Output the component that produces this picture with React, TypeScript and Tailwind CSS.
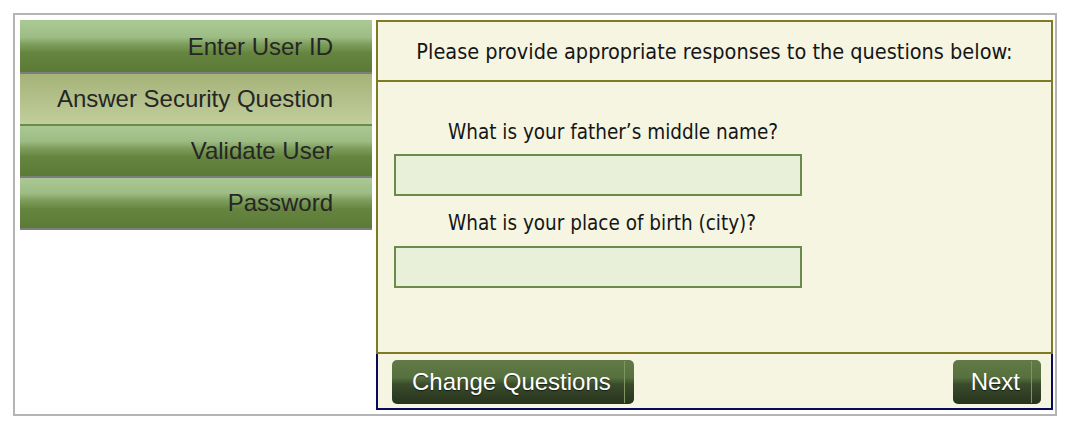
import React from 'react';

const steps = [
  { label: 'Enter User ID', active: false, line: 'border-[#7e7e7e]' },
  { label: 'Answer Security Question', active: true, line: 'border-[#6b8a4b]' },
  { label: 'Validate User', active: false, line: 'border-[#7e7e7e]' },
  { label: 'Password', active: false, line: 'border-[#7e7e7e]' },
];

const questions = ["What is your father’s middle name?", 'What is your place of birth (city)?'];

const tahoma = "font-['DejaVu_Sans_Condensed','DejaVu_Sans',sans-serif]";

const GreenButton = ({ children, pad }: { children: React.ReactNode; pad: string }) => (
  <button className="flex h-[44px] items-stretch rounded-[5px] bg-[linear-gradient(to_bottom,#627a48_0%,#56703e_40%,#3a4c2b_55%,#27331d_100%)] font-['Liberation_Sans',Arial,sans-serif] text-[24px] text-white [text-shadow:0_1px_1px_rgba(0,0,0,0.6)]">
    <span className={`flex flex-1 items-center justify-center ${pad}`}>{children}</span>
    <span className="my-[1px] w-px bg-[#7e965f]" />
    <span className="w-[9px]" />
  </button>
);

export default function App() {
  return (
    <div className="bg-white p-[13px]">
      <div className="flex w-[1044px] gap-[4px] border-2 border-[#b4b4b4] pt-[5px] pr-[2px] pb-[4px] pl-[5px]">
        {/* wizard steps */}
        <div className="flex w-[352px] flex-col self-start border-t-2 border-[#a9c893]">
          {steps.map((s) => (
            <div
              key={s.label}
              className={`flex h-[52px] items-center justify-end border-b-2 pr-[39px] font-['Liberation_Sans',Arial,sans-serif] text-[24px] text-[#262626] ${s.line} ${
                s.active
                  ? 'bg-[linear-gradient(to_bottom,#a5b378_0%,#b3c08a_50%,#c2ce9c_100%)]'
                  : 'bg-[linear-gradient(to_bottom,#a9c893_0%,#9dbd85_30%,#7d9d5c_45%,#65853f_62%,#5b7a36_100%)]'
              }`}
            >
              {s.label}
            </div>
          ))}
        </div>

        {/* question panel */}
        <div className="flex w-[677px] flex-col bg-[#f5f5e1]">
          <div className="border-2 border-[#7f7b22]">
            <div
              className={`flex h-[60px] items-center justify-center border-b-2 border-[#7f7b22] pt-[3px] text-[21.5px] text-[#161616] ${tahoma}`}
            >
              Please provide appropriate responses to the questions below:
            </div>
            <div className={`flex h-[270px] flex-col pt-[38px] pl-[16px] text-[20.5px] text-[#161616] ${tahoma}`}>
              {questions.map((q, i) => (
                <div key={q} className={i > 0 ? 'mt-[15px]' : ''}>
                  <div className="pl-[54px] leading-[24px]">{q}</div>
                  <input
                    type="text"
                    className={`${i > 0 ? 'mt-[11px]' : 'mt-[10px]'} h-[42px] w-[408px] border-2 border-[#6b8a4b] bg-[#e8f0da] outline-none`}
                  />
                </div>
              ))}
            </div>
          </div>
          <div className="flex h-[56px] items-start justify-between border-x-2 border-b-2 border-[#0a0a5c] pt-[6px] pr-[10px] pl-[14px]">
            <GreenButton pad="pl-[20px] pr-[13px]">Change Questions</GreenButton>
            <GreenButton pad="pl-[18px] pr-[11px]">Next</GreenButton>
          </div>
        </div>
      </div>
    </div>
  );
}
